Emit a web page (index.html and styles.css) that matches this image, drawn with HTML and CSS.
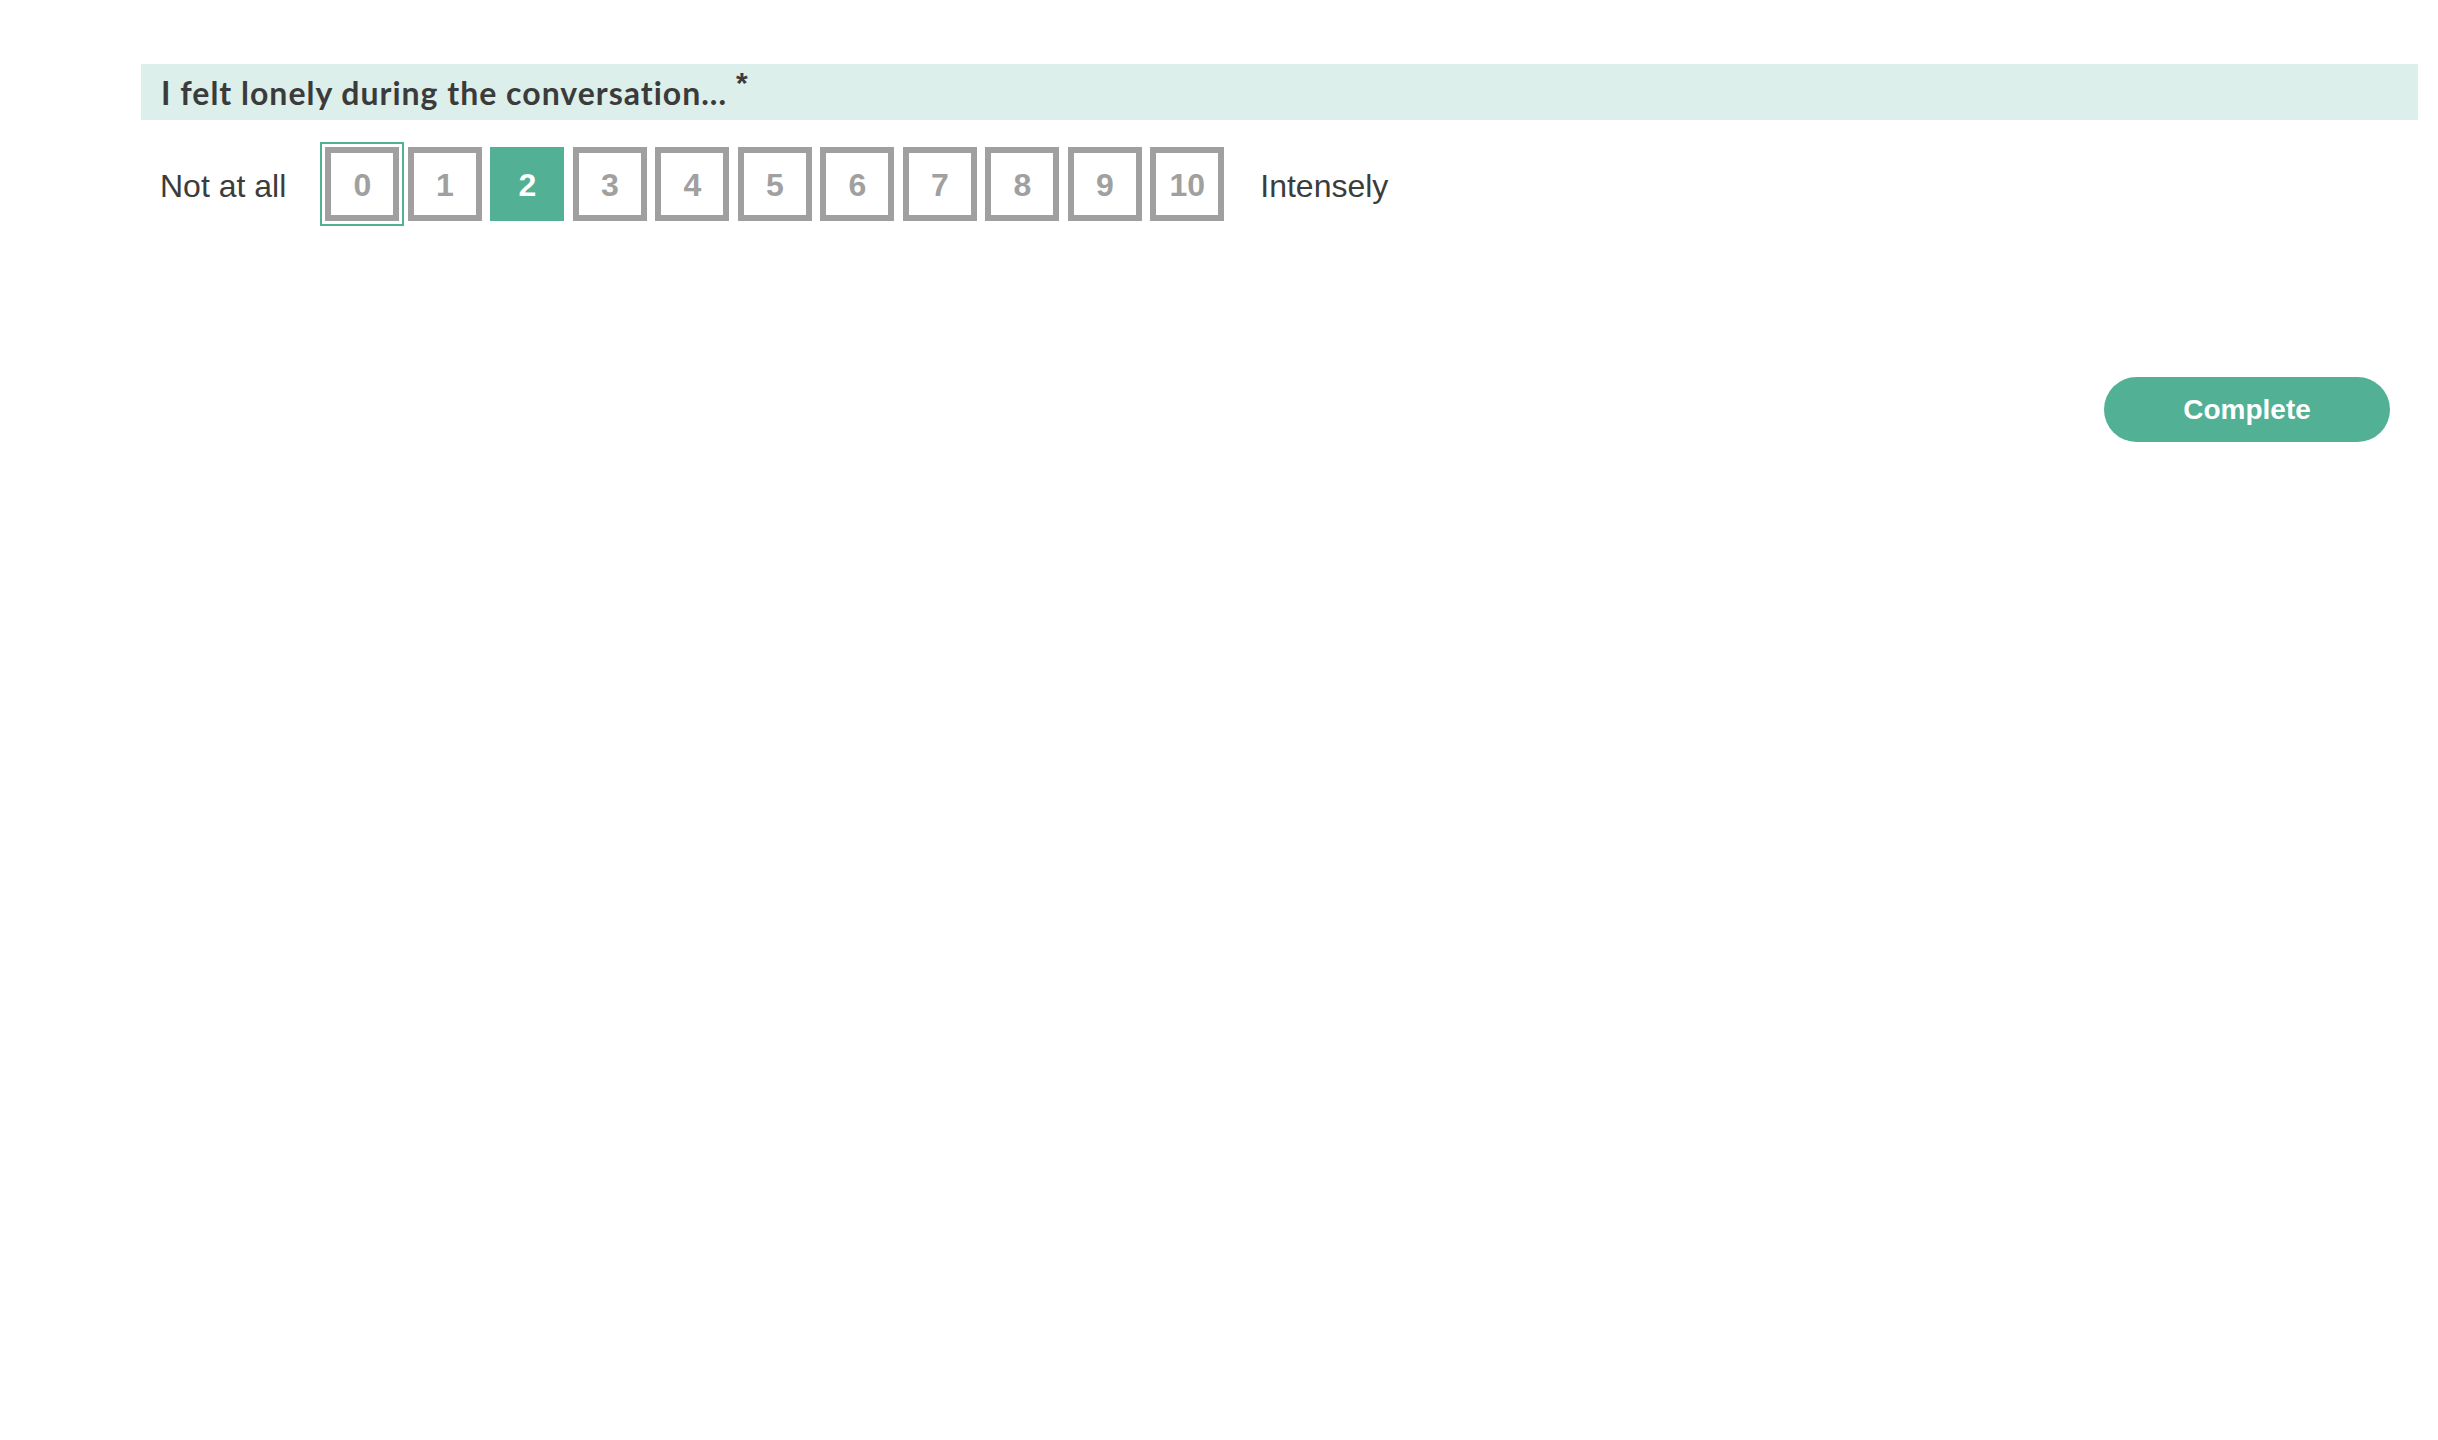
FILE: index.html
```html
<!DOCTYPE html>
<html lang="en">
<head>
<meta charset="utf-8">
<title>Survey</title>
<link rel="stylesheet" href="styles.css">
</head>
<body>
<div class="survey">
  <div class="question-title">
    <span class="title-text">I felt lonely during the conversation...</span><span class="required">*</span>
  </div>
  <div class="rating-row">
    <span class="rating-label rating-label-min">Not at all</span>
    <div class="rating-scale">
      <button class="rating-item focused">0</button>
      <button class="rating-item">1</button>
      <button class="rating-item selected">2</button>
      <button class="rating-item">3</button>
      <button class="rating-item">4</button>
      <button class="rating-item">5</button>
      <button class="rating-item">6</button>
      <button class="rating-item">7</button>
      <button class="rating-item">8</button>
      <button class="rating-item">9</button>
      <button class="rating-item">10</button>
    </div>
    <span class="rating-label rating-label-max">Intensely</span>
  </div>
  <div class="nav-row">
    <button class="complete-btn">Complete</button>
  </div>
</div>
</body>
</html>
```

FILE: styles.css
```css
html, body {
  margin: 0;
  padding: 0;
  background: #ffffff;
}

body {
  font-family: "Liberation Sans", Arial, Helvetica, sans-serif;
  color: #3c3c3c;
}

.survey {
  margin: 64px 20px 0 141px;
}

.question-title {
  background: #dcefea;
  height: 56px;
  box-sizing: border-box;
  padding-left: 20px;
  display: flex;
  align-items: center;
}

.title-text {
  font-family: "Lato", "Noto Sans", sans-serif;
  font-weight: 700;
  font-size: 32px;
  color: #3b3b3b;
  letter-spacing: 1px;
  line-height: 1;
  margin-top: 2px;
}

.required {
  font-family: "Liberation Sans", Arial, sans-serif;
  font-weight: 700;
  font-size: 30px;
  color: #3b3b3b;
  margin-left: 9px;
  align-self: flex-start;
  margin-top: 4px;
  line-height: 1;
}

.rating-row {
  display: flex;
  align-items: center;
  margin-top: 27px;
  padding-left: 19px;
  height: 74px;
}

.rating-label {
  font-size: 32px;
  color: #3c3c3c;
  white-space: nowrap;
  margin-top: 4px;
}

.rating-label-min {
  margin-right: 39px;
}

.rating-label-max {
  margin-left: 36px;
}

.rating-scale {
  display: flex;
  gap: 8.5px;
}

.rating-item {
  width: 74px;
  height: 74px;
  box-sizing: border-box;
  border: 6px solid #a0a0a0;
  background: #ffffff;
  color: #a0a0a0;
  font-family: "Liberation Sans", Arial, sans-serif;
  font-weight: 700;
  font-size: 32px;
  padding: 2px 0 0 0;
  margin: 0;
  display: flex;
  align-items: center;
  justify-content: center;
  cursor: pointer;
}

.rating-item.focused {
  outline: 2px solid #52b094;
  outline-offset: 3px;
}

.rating-item.selected {
  background: #52b094;
  border-color: #52b094;
  color: #ffffff;
}

.nav-row {
  display: flex;
  justify-content: flex-end;
  margin-top: 156px;
  padding-right: 28px;
}

.complete-btn {
  width: 286px;
  height: 65px;
  border: none;
  border-radius: 33px;
  background: #52b094;
  color: #ffffff;
  font-family: "Liberation Sans", Arial, sans-serif;
  font-weight: 700;
  font-size: 28px;
  padding: 0;
  cursor: pointer;
}
```
